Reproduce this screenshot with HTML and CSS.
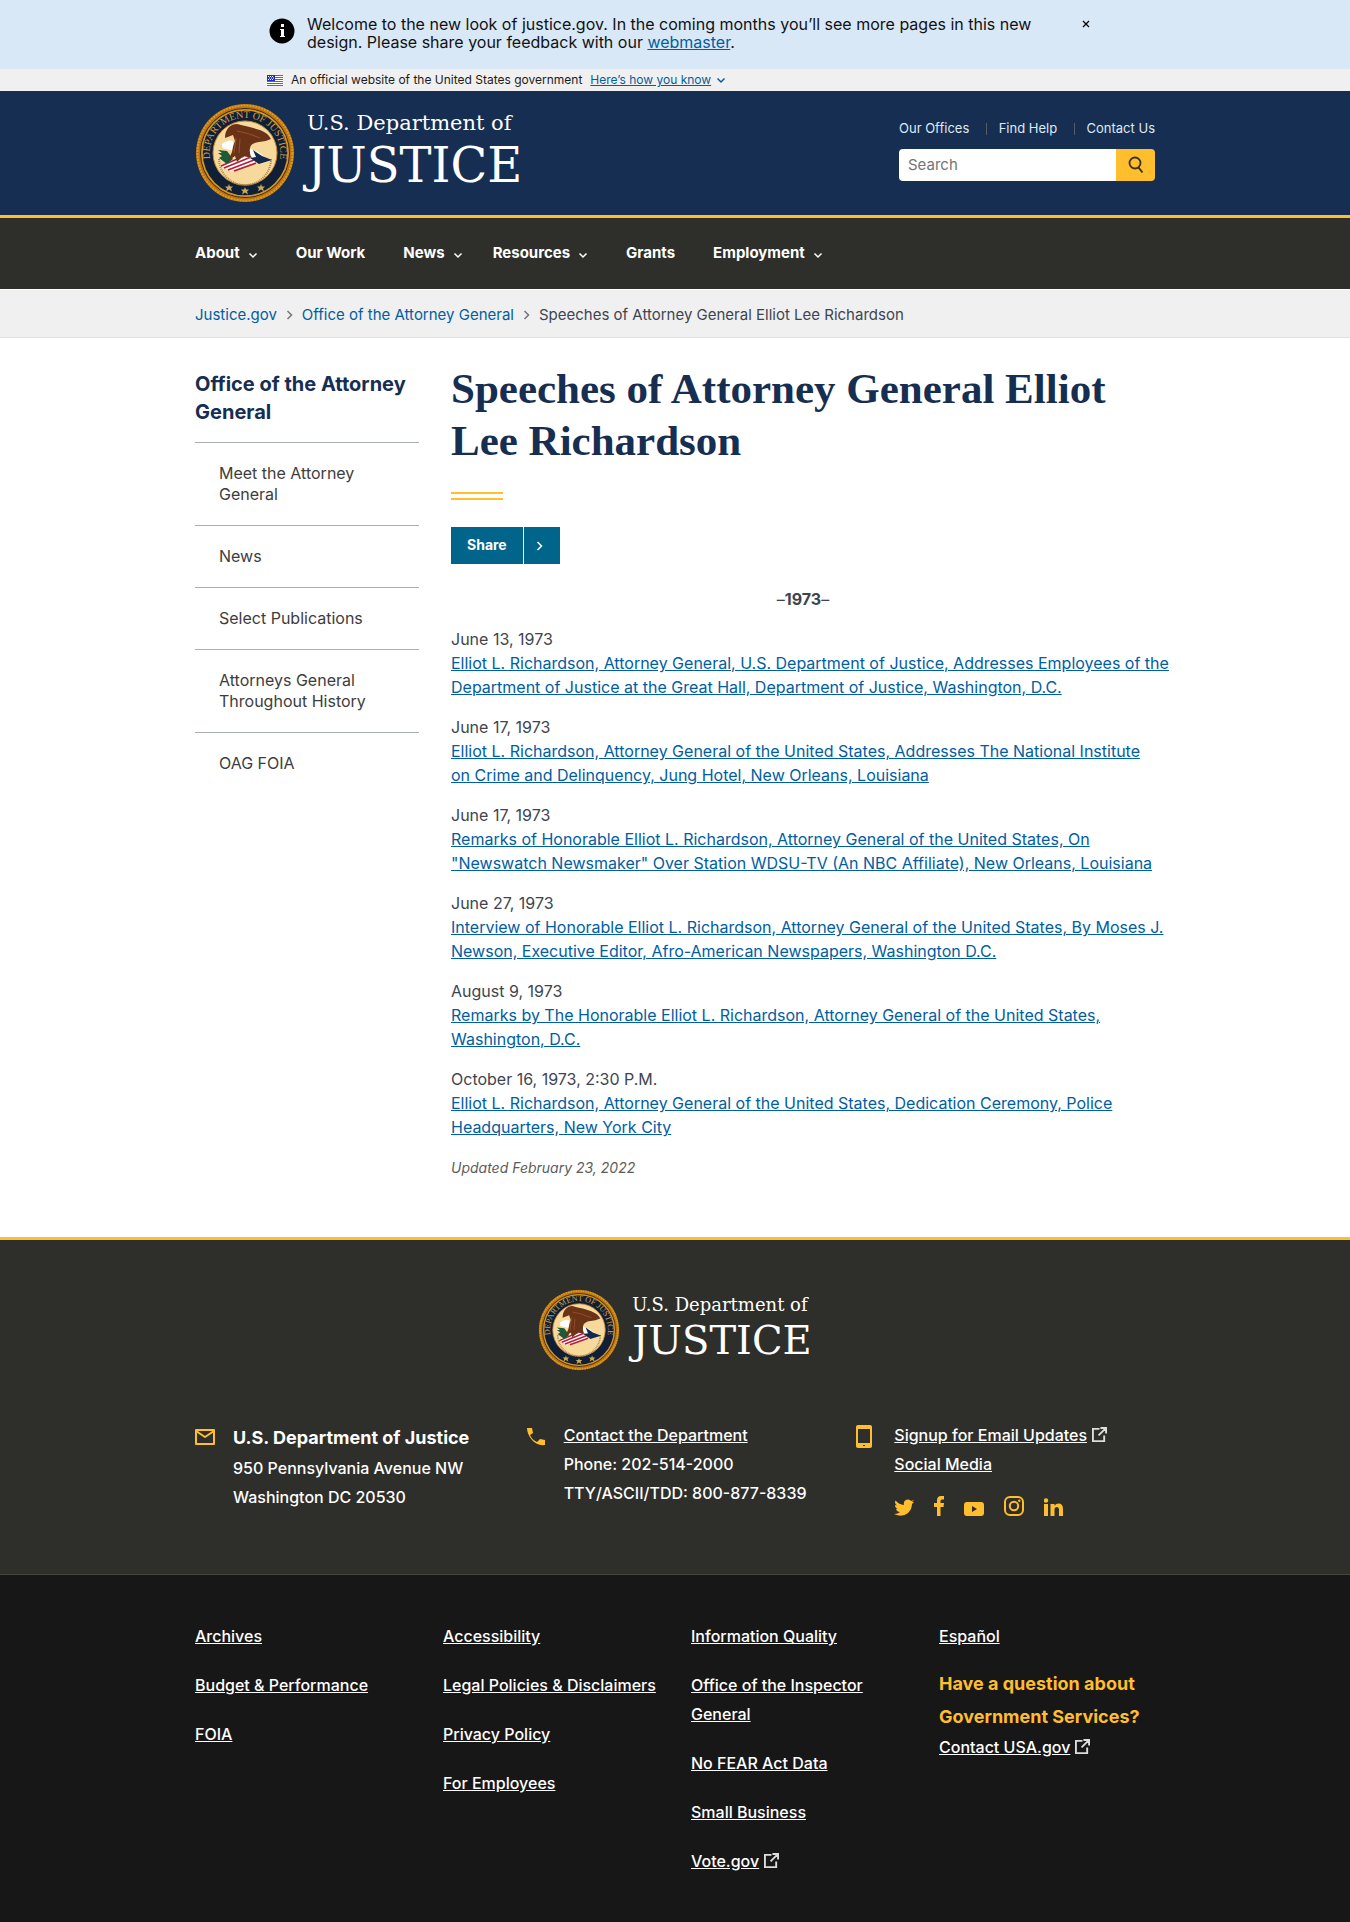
FILE: index.html
```
<!DOCTYPE html>
<html lang="en">
<head>
<meta charset="utf-8">
<meta name="viewport" content="width=device-width, initial-scale=1">
<title>Office of the Attorney General</title>
<link rel="stylesheet" href="styles.css">
</head>
<body>
<svg class="sprite" aria-hidden="true">
  <symbol id="seal" viewBox="0 0 100 100">
    <circle cx="50" cy="50" r="49" fill="#b87412"/>
    <circle cx="50" cy="50" r="47.500" fill="none" stroke="#e29a1d" stroke-width="2" stroke-dasharray="2 1"/>
    <circle cx="50" cy="50" r="44.500" fill="none" stroke="#3a2a16" stroke-width="1"/>
    <circle cx="50" cy="50" r="43" fill="#101f38" stroke="#d79523" stroke-width="1.500"/>
    <circle cx="50" cy="50" r="32" fill="#f8d99c" stroke="#c98a25" stroke-width="1"/>
    <path id="seal-arc" d="M18 65A35.300 35.300 0 1 1 82 65" fill="none"/>
    <text class="seal-text"><textPath href="#seal-arc" startOffset="50%" text-anchor="middle">DEPARTMENT OF JUSTICE</textPath></text>
    <path d="M24 56A26 26 0 0 0 76 56" fill="none" stroke="#a98552" stroke-width="2" stroke-dasharray="1 1"/>
    <path d="M27 41q6-5 11-3l1 10-12-3z" fill="#fff"/>
    <path d="M25 62l28-12 11 9-29 9z" fill="#fff"/>
    <path d="M26 63l23-10M29 65l27-11M33 67l26-10M39 68l22-8" stroke="#b51f3a" stroke-width="1.800"/>
    <path d="M23 47l9 1 6 8-6 5-8-6 3-2-4-3 4 0z" fill="#1d5b38"/>
    <path d="M51 44l12 5 12 9-10 3-10-6z" fill="#fff"/>
    <path d="M58 47l9 6 10 4-13 4-9-6 6-1z" fill="#14294b"/>
    <path d="M34 24q5-5 12-2 10 2 19 5 8 3 11 9-6 3-12 3-8 1-9 6-1 6 2 10l-9-2-6 6-2-6-7 5 4-9q1-7 3-11l-2-6-8 3q0-7 4-11z" fill="#6a3217"/>
    <path d="M42 28q12 2 23 7M41 35l-2 15M45 36l-1 14" stroke="#985329" fill="none"/>
    <g fill="#c8a957">
      <path id="seal-star" d="M50 84l1 2.500h3l-2 2 1 3-3-2-3 2 1-3-2-2h3z"/>
      <use href="#seal-star" x="-16" y="-3"/>
      <use href="#seal-star" x="16" y="-3"/>
    </g>
  </symbol>
  <symbol id="chev" viewBox="0 0 10 7"><path d="M1.500 1.500L5 5l3.500-3.500" fill="none" stroke="currentColor" stroke-width="1.500"/></symbol>
  <symbol id="chev-right" viewBox="0 0 7 10"><path d="M1.500 1l4 4-4 4" fill="none" stroke="currentColor" stroke-width="1.500"/></symbol>
  <symbol id="external" viewBox="0 0 16 16"><path d="M8 2H1v13h12V9M9 1h6v6M14.500 1.500L7 9" fill="none" stroke="currentColor" stroke-width="2"/></symbol>
</svg>

<section class="notice" aria-label="Site notice">
  <div class="narrow notice-row">
    <svg class="notice-icon" viewBox="0 0 26 26" aria-hidden="true"><circle cx="13" cy="13" r="12.500"/><path d="M12 6h3v3h-3zM11 11h4v7h1v1h-5v-1h1v-6h-1z" fill="#fff"/></svg>
    <p class="notice-text">Welcome to the new look of justice.gov. In the coming months you’ll see more pages in this new design. Please share your feedback with our <a href="#">webmaster</a>.</p>
    <button class="notice-close" type="button" aria-label="Close"><svg viewBox="0 0 8 8" width="8" height="8"><path d="M1 1l6 6M7 1L1 7" stroke="#000" stroke-width="1.300"/></svg></button>
  </div>
</section>

<section class="gov" aria-label="Official website">
  <div class="narrow gov-row">
    <svg class="flag" viewBox="0 0 16 11" aria-hidden="true"><path fill="#fff" d="M0 0h16v11H0z"/><path d="M0 .5h16M0 2.500h16M0 4.500h16M0 6.500h16M0 8.500h16M0 10.500h16" stroke="#db3e1f"/><path fill="#1d33b1" d="M0 0h8v6H0z"/><path d="M1 1.500h6M2 3h5M1 4.500h6" stroke="#fff" stroke-dasharray="1 1"/></svg>
    <span>An official website of the United States government</span>
    <button class="gov-toggle" type="button"><span>Here’s how you know</span><svg class="chev" aria-hidden="true"><use href="#chev"/></svg></button>
  </div>
</section>

<header>
  <div class="masthead">
    <div class="wrap masthead-row">
      <a class="logo" href="#">
        <svg class="seal" aria-hidden="true"><use href="#seal"/></svg>
        <span class="logo-words"><span class="logo-top">U.S. Department of</span><span class="logo-main">JUSTICE</span></span>
      </a>
      <div class="tools">
        <ul class="tool-links">
          <li><a href="#">Our Offices</a></li><li><a href="#">Find Help</a></li><li><a href="#">Contact Us</a></li>
        </ul>
        <form class="search" role="search">
          <input type="search" aria-label="Search" placeholder="Search">
          <button type="button" aria-label="Search"><svg viewBox="0 0 16 18" width="16" height="18"><circle cx="7" cy="7" r="5.500" fill="none" stroke="#3b3210" stroke-width="1.800"/><path d="M10.500 11.500l4 5" stroke="#3b3210" stroke-width="2"/></svg></button>
        </form>
      </div>
    </div>
  </div>
  <nav class="main-nav" aria-label="Primary">
    <ul class="wrap">
      <li><button type="button">About<svg class="chev" aria-hidden="true"><use href="#chev"/></svg></button></li>
      <li><a href="#">Our Work</a></li>
      <li class="tight"><button type="button">News<svg class="chev" aria-hidden="true"><use href="#chev"/></svg></button></li>
      <li><button type="button">Resources<svg class="chev" aria-hidden="true"><use href="#chev"/></svg></button></li>
      <li><a href="#">Grants</a></li>
      <li><button type="button">Employment<svg class="chev" aria-hidden="true"><use href="#chev"/></svg></button></li>
    </ul>
  </nav>
</header>

<nav class="crumbs" aria-label="Breadcrumbs">
  <ol class="wrap">
    <li><a href="#">Justice.gov</a><svg class="chev-right" aria-hidden="true"><use href="#chev-right"/></svg></li>
    <li><a href="#">Office of the Attorney General</a><svg class="chev-right" aria-hidden="true"><use href="#chev-right"/></svg></li>
    <li>Speeches of Attorney General Elliot Lee Richardson</li>
  </ol>
</nav>

<div class="wrap content">
  <aside class="side">
    <h2>Office of the Attorney General</h2>
    <ul>
      <li><a href="#">Meet the Attorney General</a></li>
      <li><a href="#">News</a></li>
      <li><a href="#">Select Publications</a></li>
      <li><a href="#">Attorneys General Throughout History</a></li>
      <li><a href="#">OAG FOIA</a></li>
    </ul>
  </aside>
  <main>
    <h1>Speeches of Attorney General Elliot Lee Richardson</h1>
    <div class="rule"></div>
    <button class="share" type="button"><span class="share-label">Share</span><span class="share-arrow"><svg class="chev-right" aria-hidden="true"><use href="#chev-right"/></svg></span></button>
    <p class="year">–<strong>1973</strong>–</p>
    <p class="wide">June 13, 1973<br><a href="#">Elliot L. Richardson, Attorney General, U.S. Department of Justice, Addresses Employees of the Department of Justice at the Great Hall, Department of Justice, Washington, D.C.</a></p>
    <p>June 17, 1973<br><a href="#">Elliot L. Richardson, Attorney General of the United States, Addresses The National Institute on Crime and Delinquency, Jung Hotel, New Orleans, Louisiana</a></p>
    <p>June 17, 1973<br><a href="#">Remarks of Honorable Elliot L. Richardson, Attorney General of the United States, On "Newswatch Newsmaker" Over Station WDSU-TV (An NBC Affiliate), New Orleans, Louisiana</a></p>
    <p class="wide">June 27, 1973<br><a href="#">Interview of Honorable Elliot L. Richardson, Attorney General of the United States, By Moses J. Newson, Executive Editor, Afro-American Newspapers, Washington D.C.</a></p>
    <p>August 9, 1973<br><a href="#">Remarks by The Honorable Elliot L. Richardson, Attorney General of the United States, Washington, D.C.</a></p>
    <p>October 16, 1973, 2:30 P.M.<br><a href="#">Elliot L. Richardson, Attorney General of the United States, Dedication Ceremony, Police Headquarters, New York City</a></p>
    <p class="updated">Updated February 23, 2022</p>
  </main>
</div>

<footer>
  <div class="foot-top">
    <div class="wrap">
      <a class="logo logo-small" href="#">
        <svg class="seal" aria-hidden="true"><use href="#seal"/></svg>
        <span class="logo-words"><span class="logo-top">U.S. Department of</span><span class="logo-main">JUSTICE</span></span>
      </a>
      <div class="contacts">
        <section class="contact">
          <svg class="contact-icon" viewBox="0 0 20 24" aria-hidden="true"><path d="M1 5h18v14H1zM1 6l9 6 9-6" fill="none" stroke="#ffbe2e" stroke-width="2" stroke-linejoin="round"/></svg>
          <div><h3>U.S. Department of Justice</h3><p>950 Pennsylvania Avenue NW</p><p>Washington DC 20530</p></div>
        </section>
        <section class="contact">
          <svg class="contact-icon" viewBox="0 0 20 24" aria-hidden="true"><path d="M1 3h5l1 5-3 2q2 5 7 7l3-3 5 1v5q-8 1-13-5T1 3z" fill="#ffbe2e"/></svg>
          <div><p><a href="#">Contact the Department</a></p><p>Phone: 202-514-2000</p><p>TTY/ASCII/TDD: 800-877-8339</p></div>
        </section>
        <section class="contact">
          <svg class="contact-icon" viewBox="0 0 20 24" aria-hidden="true"><path fill-rule="evenodd" d="M2 0h12q2 0 2 2v19q0 2-2 2H2q-2 0-2-2V2q0-2 2-2zm0 4v14h12V4zm5 16v1h2v-1z" fill="#ffbe2e"/></svg>
          <div>
            <p><a href="#">Signup for Email Updates</a><svg class="external" aria-hidden="true"><use href="#external"/></svg></p>
            <p><a href="#">Social Media</a></p>
            <div class="social">
              <a href="#" aria-label="Twitter"><svg width="20" height="20" viewBox="0 0 20 20"><path d="M20 6l-2 2q0 5-4 9-6 5-14 1 4 0 6-2-3 0-4-3h2Q1 12 1 9l2 .5Q0 7 1.500 4.500 5 8.500 10 9q-1-4 2.500-5.200Q15 3 17 5l3-1-2 2z" fill="#ffbe2e"/></svg></a>
              <a href="#" aria-label="Facebook"><svg width="10" height="20" viewBox="0 0 10 20"><path d="M3 20v-9H0V7h3V4.500Q3 0 7 0h3v3.500H8Q6.500 3.500 6.500 5v2H10l-.5 4h-3v9z" fill="#ffbe2e"/></svg></a>
              <a href="#" aria-label="YouTube"><svg width="20" height="20" viewBox="0 0 20 20"><path fill-rule="evenodd" d="M3 6h14q3 0 3 3v8q0 3-3 3H3q-3 0-3-3V9q0-3 3-3zm5 4v6l5-3z" fill="#ffbe2e"/></svg></a>
              <a href="#" aria-label="Instagram"><svg width="20" height="20" viewBox="0 0 20 20"><rect x="1" y="1" width="18" height="18" rx="5" fill="none" stroke="#ffbe2e" stroke-width="2"/><circle cx="10" cy="10" r="4.200" fill="none" stroke="#ffbe2e" stroke-width="2"/><circle cx="15.300" cy="4.700" r="1.200" fill="#ffbe2e"/></svg></a>
              <a href="#" aria-label="LinkedIn"><svg width="20" height="20" viewBox="0 0 20 20"><path d="M0 8h4v12H0zM6.500 8h4v1.700Q12 7.500 14.500 7.500 19 7.500 19 13v7h-4v-6.500q0-2.500-2-2.500-2.500 0-2.500 2.500V20h-4z" fill="#ffbe2e"/><circle cx="2" cy="4.500" r="2.200" fill="#ffbe2e"/></svg></a>
            </div>
          </div>
        </section>
      </div>
    </div>
  </div>
  <div class="foot-bottom">
    <div class="wrap foot-links">
      <ul><li><a href="#">Archives</a></li><li><a href="#">Budget &amp; Performance</a></li><li><a href="#">FOIA</a></li></ul>
      <ul><li><a href="#">Accessibility</a></li><li><a href="#">Legal Policies &amp; Disclaimers</a></li><li><a href="#">Privacy Policy</a></li><li><a href="#">For Employees</a></li></ul>
      <ul><li><a href="#">Information Quality</a></li><li><a href="#">Office of the Inspector General</a></li><li><a href="#">No FEAR Act Data</a></li><li><a href="#">Small Business</a></li><li><a href="#">Vote.gov</a><svg class="external" aria-hidden="true"><use href="#external"/></svg></li></ul>
      <div>
        <ul><li><a href="#">Español</a></li></ul>
        <h3 class="question">Have a question about Government Services?</h3>
        <a href="#">Contact USA.gov</a><svg class="external" aria-hidden="true"><use href="#external"/></svg>
      </div>
    </div>
  </div>
</footer>
</body>
</html>
```
FILE: styles.css
```
* { box-sizing: border-box; }
body {
  margin: 0;
  font: 16px/24px Inter, "Liberation Sans", sans-serif;
  color: #3d4551;
  background: #fff;
}
h1, h2, h3, p, ul, ol { margin: 0; padding: 0; }
ul, ol { list-style: none; }
button { font: inherit; color: inherit; background: none; border: 0; padding: 0; cursor: pointer; }
svg { flex: none; }
.sprite { display: block; width: 0; height: 0; }
.wrap { max-width: 1024px; margin: 0 auto; padding: 0 32px; }
.narrow { max-width: 816px; margin: 0 auto; }
.chev { width: 10px; height: 7px; }
.chev-right { width: 7px; height: 10px; }

/* Notice */
.notice { background: #d9e8f6; color: #111; padding: 15px 0 18px; }
.notice-row { display: flex; align-items: flex-start; }
.notice-icon { width: 26px; height: 26px; margin: 3px 12px 0 2px; }
.notice-text { flex: 0 0 740px; line-height: 18px; }
.notice-text a { color: #005ea2; }
.notice-close { flex: none; margin-left: 35px; height: 18px; display: flex; align-items: center; }

/* Government banner */
.gov { background: #f0f0f0; font-size: 12px; line-height: 22px; color: #1b1b1b; }
.gov-row { display: flex; align-items: center; gap: 8px; }
.flag { width: 16px; height: 11px; }
.gov-toggle { display: flex; align-items: center; gap: 5px; color: #005ea2; }
.gov-toggle span { text-decoration: underline; }

/* Masthead */
.masthead { background: #162e51; border-bottom: 3px solid #ffbe2e; }
.masthead-row { display: flex; justify-content: space-between; align-items: flex-start; padding-top: 12px; padding-bottom: 12px; }
.logo { display: flex; align-items: center; gap: 12px; color: #fff; text-decoration: none; }
.seal { width: 100px; height: 100px; }
.seal-text { font: 10px "Liberation Serif", serif; fill: #d3a04a; }
.logo-words { display: flex; flex-direction: column; font-family: "DejaVu Serif", serif; }
.logo-top { font-size: 21px; line-height: 24px; }
.logo-main { font-size: 48px; line-height: 60px; }
.tools { width: 256px; padding-top: 14px; }
.tool-links { display: flex; justify-content: space-between; font-size: 13px; line-height: 22px; margin-bottom: 10px; }
.tool-links li + li::before { content: ""; display: inline-block; height: 12px; border-left: 1px solid #565c65; margin-right: 12px; vertical-align: middle; }
.tool-links a { color: #dfe9f5; text-decoration: none; }
.search { display: flex; height: 32px; }
.search input { flex: 1; min-width: 0; border: 0; border-radius: 4px 0 0 4px; padding: 0 9px; font: inherit; font-size: 15px; appearance: none; }
.search input::placeholder { color: #757575; }
.search button { width: 39px; background: #ffbe2e; border-radius: 0 4px 4px 0; display: flex; align-items: center; justify-content: center; }

/* Primary navigation */
.main-nav { background: #2e2e2a; }
.main-nav ul { display: flex; gap: 38px; }
.main-nav .tight { margin-right: -8px; }
.main-nav a, .main-nav button { display: flex; align-items: center; gap: 8px; padding: 23px 0 24px; color: #fff; font-size: 15px; font-weight: 700; line-height: 24px; text-decoration: none; }
.main-nav .chev { margin-top: 4px; }

/* Breadcrumbs */
.crumbs { background: #f0f0f0; border-top: 1px solid #fff; border-bottom: 1px solid #dfe1e2; font-size: 15px; line-height: 24px; padding: 13px 0 10px; }
.crumbs ol { display: flex; }
.crumbs li { display: flex; align-items: center; }
.crumbs a { color: #005ea2; text-decoration: none; }
.crumbs .chev-right { margin: 0 9px; color: #71767a; }

/* Content */
.content { display: grid; grid-template-columns: 224px minmax(0, 1fr); gap: 32px; padding-top: 25px; padding-bottom: 57px; }
.side { padding-top: 7px; }
.side h2 { font-size: 20px; line-height: 28px; color: #162e51; margin-bottom: 16px; }
.side li { border-top: 1px solid #a9aeb1; padding: 20px 48px 20px 24px; line-height: 21px; }
.side a { color: #3d3d3d; text-decoration: none; }
h1 { font: 700 43px/52px "Liberation Serif", serif; color: #162e51; }
.rule { width: 52px; height: 8px; margin: 25px 0 27px; border: solid #ffbe2e; border-width: 2px 0; }
.share { display: flex; height: 37px; background: #00648b; color: #fff; font-size: 14px; font-weight: 700; margin-bottom: 23px; }
.share-label { padding: 0 16px; line-height: 36px; }
.share-arrow { width: 37px; height: 37px; border-left: 1px solid #fff; display: flex; align-items: center; padding-left: 12px; }
main p { margin-bottom: 16px; }
main .wide { margin-right: -24px; }
main p a { color: #005ea2; }
.year { text-align: center; }
main .updated { font-size: 14px; font-style: italic; color: #5c5c5c; margin: 17px 0 0; }

/* Footer */
.foot-top { background: #2e2e2a; border-top: 3px solid #ffbe2e; padding: 49px 0 58px; }
.logo-small { justify-content: center; }
.logo-small .seal { width: 82px; height: 82px; }
.logo-small .logo-top { font-size: 18px; line-height: 20px; }
.logo-small .logo-main { font-size: 40px; line-height: 50px; }
.contacts { display: grid; grid-template-columns: repeat(3, minmax(0, 1fr)); gap: 32px; margin-top: 50px; color: #fff; line-height: 29px; font-weight: 500; }
.contact { display: flex; gap: 18px; }
.contact-icon { width: 20px; height: 24px; margin-top: 4px; }
.contact h3 { font-size: 18px; line-height: 33px; }
.contacts a, .foot-links a { color: #fff; }
.external { width: 15px; height: 15px; margin-left: 5px; vertical-align: -1px; color: #ddd; }
.social { display: flex; gap: 20px; padding-top: 17px; }
.social a { display: flex; }
.foot-bottom { background: #171717; border-top: 1px solid #454540; padding: 47px 0 48px; color: #fff; line-height: 29px; font-weight: 500; }
.foot-links { display: grid; grid-template-columns: repeat(4, minmax(0, 1fr)); gap: 32px; }
.foot-links ul { display: grid; gap: 20px; align-content: start; }
.question { color: #ffbe2e; font-size: 18px; line-height: 33px; margin-top: 16px; }
```
